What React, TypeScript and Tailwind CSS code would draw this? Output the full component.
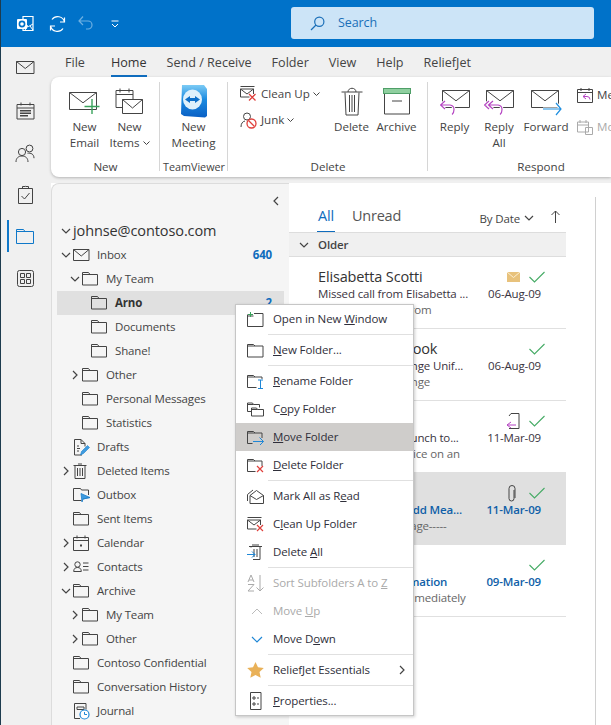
import type { ReactNode } from 'react'

const INK = '#444444'

function Svg({ w, h, children, className }: { w: number; h: number; children: ReactNode; className?: string }) {
  return (
    <svg width={w} height={h} viewBox={`0 0 ${w} ${h}`} fill="none" stroke={INK} strokeWidth="1" className={`shrink-0 ${className ?? ''}`}>
      {children}
    </svg>
  )
}

/* ---- small shared drawings ---- */
const Fold = ({ c = INK }: { c?: string }) => <path d="M.5 14V1.500h6l1.500 2h7.500V14z M.5 3.500H8" stroke={c} />

function FolderIcon({ children, c }: { children?: ReactNode; c?: string }) {
  return (
    <Svg w={18} h={16}>
      <Fold c={c} />
      {children}
    </Svg>
  )
}

function Chevron({ dir, c = INK }: { dir: 'down' | 'right' | 'up' | 'left'; c?: string }) {
  const d = { down: 'M1 3l4 4 4-4', right: 'M3 1l4 4-4 4', up: 'M1 7l4-4 4 4', left: 'M7 1L3 5l4 4' }[dir]
  return <Svg w={10} h={10}><path d={d} stroke={c} strokeWidth="1.2" /></Svg>
}

function Envelope({ x = 0, y = 0, w = 28, h = 18 }: { x?: number; y?: number; w?: number; h?: number }) {
  return (
    <g transform={`translate(${x} ${y})`}>
      <path d={`M.5 .5h${w - 1}v${h - 1}h-${w - 1}z`} fill="#fff" />
      <path d={`M.5 .5L${w / 2} ${h * 0.6}L${w - 0.5} .5`} />
    </g>
  )
}

/* ---- rail ---- */
const railIcons = [
  <Svg w={19} h={15}><path d="M.5 1.500h17.500v12H.5z M.5 1.500l8.750 7 8.750-7" /></Svg>,
  <Svg w={19} h={19}>
    <path d="M1 3.500h17v14.500H1z M1 7h17 M5 1.500v3 M14 1.500v3" />
    <path d="M4 9h11v1.500H4z M4 11.500h11V13H4z M4 14h8v1.500H4z" fill={INK} stroke="none" />
  </Svg>,
  <Svg w={20} h={19}>
    <circle cx="7" cy="8" r="3.600" />
    <path d="M1 18c0-4 2.500-6 6-6s6 2 6 6" />
    <circle cx="14.500" cy="4.500" r="3.400" />
    <path d="M12.500 9.200c3.500-.5 6.500 1 6.500 5" />
  </Svg>,
  <Svg w={15} h={19}>
    <path d="M.5 3.500h14v15H.5z M4.500 3.500V1.500h2.500a1 1 0 0 1 1 0h2.500v2" />
    <path d="M3.500 11l3 3 5-6" />
  </Svg>,
  <Svg w={18} h={15}><path d="M.5 14.500V.5h7l1.500 2h8.500v12z M.5 2.500H9" stroke="#0f78c9" /></Svg>,
  <Svg w={17} h={17}>
    <rect x=".5" y=".5" width="16" height="16" rx="2" />
    <path d="M3.500 3.500h4v4h-4z M9.500 3.500h4v4h-4z M3.500 9.500h4v4h-4z M9.500 9.500h4v4h-4z" />
  </Svg>,
]

function Rail() {
  return (
    <div className="w-[51px] shrink-0 flex flex-col items-center border-l border-[#1d3c4f] pr-[2px]">
      <div className="h-[43px] mt-[-1px] flex items-center">{railIcons[0]}</div>
      <div className="h-[43px] flex items-center">{railIcons[1]}</div>
      <div className="h-[43px] flex items-center">{railIcons[2]}</div>
      <div className="h-[38px] flex items-center">{railIcons[3]}</div>
      <div className="h-[46px] w-full flex items-center justify-center relative">
        <span className="absolute left-[6px] top-[7px] w-[2px] h-[32px] bg-[#0f78c9]" />
        {railIcons[4]}
      </div>
      <div className="h-[38px] flex items-center">{railIcons[5]}</div>
    </div>
  )
}

/* ---- title bar ---- */
function TitleBar() {
  return (
    <div className="h-[47px] shrink-0 bg-[#0072c9] flex items-center border-l border-[#1d3c4f]">
      <svg width="17" height="17" viewBox="0 0 17 17" className="ml-[16px]">
        <path d="M6 1.500h10v14H6z" fill="none" stroke="#fff" strokeWidth="1.2" />
        <path d="M8 9l3.500 2.500L16 9M8 15l3-4M16 15l-3-4" fill="none" stroke="#fff" />
        <rect x="0" y="4" width="10" height="10" rx="1" fill="#fff" />
        <circle cx="5" cy="9" r="2.600" fill="none" stroke="#0072c9" strokeWidth="1.6" />
      </svg>
      <svg width="17" height="18" viewBox="0 0 17 18" fill="none" stroke="#fff" strokeWidth="1.2" className="ml-[15px]">
        <path d="M15.500 7A7 7 0 0 0 3 4.500 M1.500 11A7 7 0 0 0 14 13.500" />
        <path d="M15.500 2.500V7H11 M1.500 15.500V11H6" />
      </svg>
      <svg width="15" height="17" viewBox="0 0 15 17" fill="none" stroke="#6db0e2" strokeWidth="1.2" className="ml-[12px]">
        <path d="M1 6h9a4 4 0 0 1 0 8H8 M5 1.500L1 6l4 4" />
      </svg>
      <svg width="8" height="8" viewBox="0 0 8 8" fill="none" stroke="#fff" className="ml-[18px]">
        <path d="M.5 1h7 M1 4l3 3 3-3" />
      </svg>
      <div className="ml-[172px] w-[303px] h-[32px] mb-[1px] rounded-[3px] bg-[#cce4f7] flex items-center pl-[19px]">
        <svg width="15" height="15" viewBox="0 0 15 15" fill="none" stroke="#1a6fb8" strokeWidth="1.2">
          <circle cx="9.300" cy="5.700" r="4.600" />
          <path d="M6 9L1 14" />
        </svg>
        <span className="ml-[13px] text-[12.5px] tracking-[-0.1px] text-[#1a6fb8]">Search</span>
      </div>
    </div>
  )
}

/* ---- ribbon ---- */
const tabs = ['File', 'Home', 'Send / Receive', 'Folder', 'View', 'Help', 'ReliefJet']

function Tabs() {
  return (
    <div className="h-[30px] flex items-center pl-[14px] pt-[2px] gap-[20px] text-[12.6px] text-[#444]">
      {tabs.map((t) =>
        t === 'Home' ? (
          <span key={t} className="relative ml-[6px] font-medium text-[#333]">
            {t}
            <span className="absolute left-0 right-0 bottom-[-5px] h-[2px] bg-[#0f6cbd]" />
          </span>
        ) : (
          <span key={t}>{t}</span>
        ),
      )}
    </div>
  )
}

function BigBtn({ icon, label, w = 'w-[45px]', dim }: { icon: ReactNode; label: ReactNode; w?: string; dim?: boolean }) {
  return (
    <div className={`${w} flex flex-col items-center shrink-0 ${dim ? 'text-[#aaa]' : ''}`}>
      <div className="h-[35px] flex items-center justify-center">{icon}</div>
      <div className="text-center leading-[16px] whitespace-nowrap">{label}</div>
    </div>
  )
}

function Group({ w, label, children, last, small }: { w: string; label: string; children: ReactNode; last?: boolean; small?: boolean }) {
  return (
    <div className={`${w} shrink-0 flex flex-col relative`}>
      <div className="flex-1 flex pt-[7px]">{children}</div>
      <div className={`h-[18px] mb-[1px] flex items-center justify-center text-[#444] ${small ? 'text-[10.8px]' : ''}`}>{label}</div>
      {!last && <span className="absolute right-0 top-[5px] bottom-[6px] w-[1px] bg-[#d6d6d6]" />}
    </div>
  )
}

const NewEmailIcon = (
  <Svg w={31} h={28}>
    <Envelope x={0} y={4} />
    <path d="M23 11v15 M15.500 18.500h15" stroke="#3aa35c" strokeWidth="1.4" />
  </Svg>
)
const NewItemsIcon = (
  <Svg w={29} h={29}>
    <path d="M1 3.500h17v17H1z M1 7.500h17 M5 1.500v4 M14 1.500v4" />
    <Envelope x={7} y={12} w={21} h={15} />
  </Svg>
)
const TeamViewerIcon = (
  <svg width="28" height="33" viewBox="0 0 28 33">
    <defs>
      <linearGradient id="tv" x1="0" y1="0" x2="0" y2="1">
        <stop offset="0" stopColor="#7ccbf5" />
        <stop offset=".45" stopColor="#1a8ae0" />
        <stop offset="1" stopColor="#0a5fc4" />
      </linearGradient>
    </defs>
    <path d="M2 0h22l3 4v27l-2 1.500L4 31 1 29z" fill="url(#tv)" />
    <ellipse cx="12.500" cy="14.500" rx="9.500" ry="10" fill="#dff0fb" />
    <path d="M5 14.500l5-3.500v2h5v-2l5 3.500-5 3.500v-2h-5v2z" fill="#0e6fc9" />
  </svg>
)
const DeleteIcon = (
  <Svg w={22} h={29}>
    <path d="M4 5.500l1 22.500h12l1-22.500 M.5 5h21 M7 5c0-5 8-5 8 0 M8.500 8v17 M11 8v17 M13.500 8v17" />
  </Svg>
)
const ArchiveIcon = (
  <Svg w={28} h={27}>
    <rect x=".5" y=".5" width="27" height="5" fill="#8fcf9f" stroke="#4f9f68" />
    <path d="M1.500 6v20h25V6 M9 13h10" />
  </Svg>
)
const ReplyArrow = ({ x = 0 }: { x?: number }) => {
  const d = `M${x + 5} 12l-4.500 4 4.500 4 M${x + 1} 16h9a4.500 4.500 0 0 1 4 4.500c0 2-.5 4-2 5`
  return (
    <>
      <path d={d} stroke="#fff" strokeWidth="3" />
      <path d={d} stroke="#b545c2" strokeWidth="1.2" />
    </>
  )
}
const ReplyIcon = (
  <Svg w={30} h={28} className="mt-[3px]">
    <Envelope x={2} y={1} />
    <ReplyArrow />
  </Svg>
)
const ReplyAllIcon = (
  <Svg w={30} h={28} className="mt-[3px]">
    <Envelope x={2} y={1} />
    <path d="M5 12l-4.500 4 4.500 4" stroke="#fff" strokeWidth="3" />
    <ReplyArrow x={4} />
    <path d="M5 12l-4.500 4 4.500 4" stroke="#b545c2" strokeWidth="1.2" />
  </Svg>
)
const ForwardIcon = (
  <Svg w={31} h={26} className="mt-[3px]">
    <Envelope x={0} y={0} />
    <path d="M12 19h18 M25 13l5 6-5 6" stroke="#fff" strokeWidth="3" />
    <path d="M12 19h18 M25 13l5 6-5 6" stroke="#1f8fe0" strokeWidth="1.2" />
  </Svg>
)
const CleanUpIcon = (
  <Svg w={17} h={16}>
    <path d="M.5 .5h14 M.5 3v8h9 M.5 3h13v5 M.5 3l6.500 5 6.500-5" />
    <path d="M9 8l6.500 6.500 M15.500 8L9 14.500" stroke="#e0403c" strokeWidth="1.3" />
  </Svg>
)
const JunkIcon = (
  <Svg w={17} h={17}>
    <circle cx="7" cy="4.500" r="3.500" />
    <path d="M1 15c0-3.500 1.500-5.500 4-6" />
    <circle cx="11.500" cy="11.500" r="4.500" stroke="#e0403c" strokeWidth="1.3" />
    <path d="M8.500 8.500l6 6" stroke="#e0403c" strokeWidth="1.3" />
  </Svg>
)
const SmallDown = <svg width="7" height="5" viewBox="0 0 7 5" fill="none" stroke="#444" className="inline-block ml-[3px] mb-[1px]"><path d="M.5 .5l3 3 3-3" /></svg>

function Ribbon() {
  return (
    <div className="h-[100px] bg-white rounded-l-[8px] shadow-[0_1px_3px_rgba(0,0,0,0.25)] flex text-[11.6px] text-[#444]">
      <Group w="w-[109px]" label="New">
        <div className="w-[11px]" />
        <BigBtn icon={NewEmailIcon} label={<>New<br />Email</>} />
        <BigBtn icon={NewItemsIcon} label={<>New<br />Items{SmallDown}</>} />
      </Group>
      <Group w="w-[68px]" label="TeamViewer" small>
        <BigBtn w="w-[67px]" icon={TeamViewerIcon} label={<>New<br />Meeting</>} />
      </Group>
      <Group w="w-[200px]" label="Delete">
        <div className="w-[101px] pl-[12px] shrink-0 flex flex-col gap-[8px] pt-[1px]">
          <div className="flex items-center gap-[4px] h-[18px]">{CleanUpIcon}<span>Clean Up{SmallDown}</span></div>
          <div className="flex items-center gap-[4px] h-[18px]">{JunkIcon}<span>Junk{SmallDown}</span></div>
        </div>
        <BigBtn icon={DeleteIcon} label="Delete" />
        <BigBtn icon={ArchiveIcon} label="Archive" />
      </Group>
      <Group w="w-[226px]" label="Respond" last>
        <div className="w-[4px]" />
        <BigBtn w="w-[45px]" icon={ReplyIcon} label="Reply" />
        <BigBtn w="w-[44px]" icon={ReplyAllIcon} label={<>Reply<br />All</>} />
        <BigBtn w="w-[50px]" icon={ForwardIcon} label="Forward" />
        <div className="pl-[6px] flex flex-col gap-[14px] pt-[2px]">
          <div className="flex items-center gap-[4px] h-[18px] whitespace-nowrap">
            <Svg w={16} h={16}><path d="M.5 2.500h15v13H.5z M.5 5.500h15 M4 1v3 M12 1v3" /><path d="M9 7l-3 2.500 3 2.500 M6 9.500h4a3 3 0 0 1 3 3" stroke="#b545c2" /></Svg>
            <span>Meeting</span>
          </div>
          <div className="flex items-center gap-[4px] h-[18px] whitespace-nowrap text-[#aaa]">
            <Svg w={16} h={16}><path d="M.5 3h11v10H.5z M.5 6h11 M3 1v3 M9 1v3 M8.500 8.500h7v7h-7z" stroke="#aaa" fill="#fff" /></Svg>
            <span>More</span>
          </div>
        </div>
      </Group>
    </div>
  )
}

/* ---- folder tree ---- */
const TreeIcons: Record<string, ReactNode> = {
  folder: <FolderIcon />,
  mail: <Svg w={17} h={14}><path d="M.5 1.500h15.500v11H.5z M.5 1.500l7.750 6.500 7.750-6.500" /></Svg>,
  drafts: (
    <Svg w={17} h={17}>
      <path d="M9 16H1.500V.5H8l4 4v3 M8 .5v4h4 M4 7h2 M4 9.500h3 M4 12h2" />
      <path d="M7.500 16l1-3.500 6-6 2 2-6 6z" fill="#3d9be0" stroke="#1f7fc9" strokeWidth=".6" />
    </Svg>
  ),
  trash: <Svg w={14} h={16}><path d="M2 2.500v13h10v-13 M.5 2.500h13 M5 1h4 M4.500 5v8 M7 5v8 M9.500 5v8" /></Svg>,
  outbox: (
    <Svg w={18} h={16}>
      <path d="M.5 13.500V1.500h7l1 1.500h7v5 M.5 13.500h8" />
      <path d="M8 6.500l9 4-7 1.500-1 3z M10 12l7-1.500" fill="#3d9be0" stroke="#1f7fc9" strokeWidth=".8" />
    </Svg>
  ),
  calendar: (
    <Svg w={16} h={16}>
      <path d="M.5 2.500h15v13H.5z M.5 5.500h15 M4 .5v3 M12 .5v3" />
      <rect x="7" y="9.500" width="2" height="2" fill={INK} stroke="none" />
    </Svg>
  ),
  contacts: (
    <Svg w={16} h={14}>
      <circle cx="4.500" cy="4.500" r="2.700" />
      <path d="M.7 11.500c0-2.800 1.500-4 3.800-4s3.800 1.200 3.800 4z M10 3h5.500 M10 6.500h5.500 M10 10h5.500" />
    </Svg>
  ),
  journal: (
    <Svg w={17} h={17}>
      <path d="M7 15.500H1.500V.5h11.500v6 M4 4h7v2.500H4z" />
      <circle cx="11.500" cy="11.500" r="4.500" fill="#fff" stroke="#1f87d6" strokeWidth="1.2" />
      <path d="M11.500 9v2.500h2.500" stroke="#1f87d6" />
    </Svg>
  ),
}

type TreeRow = { label: string; depth: number; icon?: string; open?: boolean; closed?: boolean; count?: string; selected?: boolean }

const rows: TreeRow[] = [
  { label: 'Inbox', depth: 0, icon: 'mail', open: true, count: '640' },
  { label: 'My Team', depth: 1, open: true },
  { label: 'Arno', depth: 2, selected: true, count: '2' },
  { label: 'Documents', depth: 2 },
  { label: 'Shane!', depth: 2 },
  { label: 'Other', depth: 1, closed: true },
  { label: 'Personal Messages', depth: 1 },
  { label: 'Statistics', depth: 1 },
  { label: 'Drafts', depth: 0, icon: 'drafts' },
  { label: 'Deleted Items', depth: 0, icon: 'trash', closed: true },
  { label: 'Outbox', depth: 0, icon: 'outbox' },
  { label: 'Sent Items', depth: 0 },
  { label: 'Calendar', depth: 0, icon: 'calendar', closed: true },
  { label: 'Contacts', depth: 0, icon: 'contacts', closed: true },
  { label: 'Archive', depth: 0, open: true },
  { label: 'My Team', depth: 1, closed: true },
  { label: 'Other', depth: 1, closed: true },
  { label: 'Contoso Confidential', depth: 0 },
  { label: 'Conversation History', depth: 0 },
  { label: 'Journal', depth: 0, icon: 'journal' },
]

const indent = ['pl-[4px]', 'pl-[13px]', 'pl-[22px]']

function FolderPane() {
  return (
    <div className="w-[238px] shrink-0 bg-[#f5f5f5] rounded-tl-[8px] border-t border-l border-[#dcdcdc] overflow-hidden tracking-[-0.15px]">
      <div className="h-[22px] flex justify-end items-end pr-[8px]"><Chevron dir="left" /></div>
      <div className="h-[13px]" />
      <div className="h-[24px] flex items-center pl-[9px] text-[14.5px] tracking-[-0.1px] text-[#333]">
        <Chevron dir="down" />
        <span className="ml-[2px]">johnse@contoso.com</span>
      </div>
      {rows.map((r, i) => (
        <div key={i} className={`ml-[5px] w-[227px] h-[24px] flex items-center ${indent[r.depth]} ${r.selected ? 'bg-[#e0e0e0]' : ''}`}>
          <span className="w-[12px] shrink-0 flex">
            {r.open && <Chevron dir="down" />}
            {r.closed && <Chevron dir="right" />}
          </span>
          <span className="w-[24px] shrink-0 flex">{TreeIcons[r.icon ?? 'folder']}</span>
          <span className={`flex-1 whitespace-nowrap ${r.selected ? 'font-bold text-[#333]' : 'text-[#444]'}`}>{r.label}</span>
          {r.count && <span className="font-bold text-[#0f6cbd] pr-[12px]">{r.count}</span>}
        </div>
      ))}
    </div>
  )
}

/* ---- message list ---- */
const Check = <Svg w={16} h={12}><path d="M.5 6l5 5L15.500 1" stroke="#46ab66" strokeWidth="1.1" /></Svg>

type Msg = { name: string; subject: string; preview: string; date: string; icon?: ReactNode; unread?: boolean; selected?: boolean }

const messages: Msg[] = [
  {
    name: 'Elisabetta Scotti',
    subject: 'Missed call from Elisabetta ...',
    preview: 'You missed calls from',
    date: '06-Aug-09',
    icon: <svg width="13" height="10" viewBox="0 0 13 10" className="mr-[9px]"><rect width="13" height="10" fill="#e8c27c" /><path d="M0 0l6.500 5.500L13 0" fill="none" stroke="#fbeed2" /></svg>,
  },
  { name: 'Microsoft Outlook', subject: 'A Microsoft Exchange Unif...', preview: 'A Microsoft Exchange', date: '06-Aug-09' },
  {
    name: 'Arno Bost',
    subject: "Let's go out for a lunch to...",
    preview: 'Please see the notice on an',
    date: '11-Mar-09',
    icon: (
      <Svg w={14} h={17} className="mr-[9px]">
        <path d="M5 .5h8v15H3 M5 .5L3 3" />
        <path d="M5 9l-4 3 4 3 M1 12h9" stroke="#b545c2" />
      </Svg>
    ),
  },
  {
    name: 'Arno Bost',
    subject: 'Fwd: Notes for Todd Mea...',
    preview: '------Original Message-----',
    date: '11-Mar-09',
    unread: true,
    selected: true,
    icon: (
      <Svg w={10} h={17} className="mr-[12px]">
        <path d="M7 5v8.500a2.500 2.500 0 0 1-5 0V3.500a3 3 0 0 1 6 0V13" />
      </Svg>
    ),
  },
  {
    name: 'Shane Kim',
    subject: 'A Meeting Confirmation',
    preview: 'Please respond immediately',
    date: '09-Mar-09',
    unread: true,
  },
]

function MessageRow({ m }: { m: Msg }) {
  return (
    <div className={`h-[72px] pl-[29px] pr-[25px] border-b border-[#e0e0e0] tracking-[-0.15px] ${m.selected ? 'bg-[#e0e0e0]' : ''}`}>
      <div className="h-[29px] pt-[11px] flex items-center justify-between">
        <span className="text-[14.5px] text-[#333] whitespace-nowrap">{m.name}</span>
        <span className="flex items-center mr-[-4px]">{m.icon}{Check}</span>
      </div>
      <div className={`h-[16px] flex items-center justify-between whitespace-nowrap ${m.unread ? 'font-semibold text-[#0f5fa8]' : 'text-[#3a3340]'}`}>
        <span>{m.subject}</span>
        <span>{m.date}</span>
      </div>
      <div className="h-[15px] flex items-center text-[#666] whitespace-nowrap">{m.preview}</div>
    </div>
  )
}

function MessageList() {
  return (
    <div className="w-[277px] shrink-0 bg-white">
      <div className="h-[49px] pl-[28px] pr-[6px] flex items-end justify-between">
        <div className="flex gap-[17px] text-[14.5px] tracking-[-0.2px]">
          <span className="relative text-[#0f6cbd] pb-[5px] px-[1px]">
            All
            <span className="absolute left-0 right-0 bottom-0 h-[1px] bg-[#0f6cbd]" />
          </span>
          <span className="text-[#555] pb-[5px]">Unread</span>
        </div>
        <div className="flex items-center pb-[5px] text-[#444] tracking-[-0.15px]">
          <span>By Date</span>
          <span className="ml-[4px]"><Chevron dir="down" /></span>
          <svg width="9" height="13" viewBox="0 0 9 13" fill="none" stroke="#444" className="ml-[17px] mb-[3px]"><path d="M4.500 13V1 M.5 5l4-4 4 4" /></svg>
        </div>
      </div>
      <div className="h-[25px] bg-[#f0f0f0] border-y border-[#dddddd] flex items-center pl-[10px] text-[#444] font-semibold tracking-[-0.15px]">
        <Chevron dir="down" />
        <span className="ml-[9px]">Older</span>
      </div>
      {messages.map((m) => <MessageRow key={m.date + m.subject} m={m} />)}
    </div>
  )
}

/* ---- context menu ---- */
const MI = {
  open: <Svg w={17} h={15}><path d="M.5 2.500v12h15.500v-13H7 M.5 4h6" /><path d="M3.500 0v5 M1 2.500h5" stroke="#3aa35c" /></Svg>,
  fold: <Svg w={17} h={15}><path d="M.5 14V1.500h6l1.500 1.500h8v11z M.5 3H8" /></Svg>,
  rename: <Svg w={17} h={15}><path d="M.5 13.500V1.500h6l1.500 1.500h7v2 M.5 3H8 M.5 13.500h9" /><path d="M11 6h5 M11 14.500h5 M13.500 6v8.500" stroke="#1f87d6" /></Svg>,
  copy: <Svg w={17} h={15}><path d="M.5 9.500V1h5l1 1.500h6v3 M.5 2.500h6 M.5 9.500H4" /><path d="M4.500 14V6h5l1 1.500h6V14z M4.500 7.500h6" /></Svg>,
  move: <Svg w={17} h={15}><path d="M.5 13.500V1.500h6l1.500 1.500h7v5 M.5 3H8 M.5 13.500h5" /><path d="M6 11.500h10.500 M12.500 7.500l4 4-4 4" stroke="#1f87d6" /></Svg>,
  del: <Svg w={17} h={15}><path d="M.5 13.500V1.500h6l1.500 1.500h7v5 M.5 3H8 M.5 13.500h8" /><path d="M10 8l6 6 M16 8l-6 6" stroke="#e0403c" strokeWidth="1.2" /></Svg>,
  read: <Svg w={17} h={15}><path d="M3 14.500h13.500V6.500L9.500 1.500 3 6.500z M3 6.500l6.500 4 7-4 M.5 12V5.500L6 1" /></Svg>,
  clean: <Svg w={17} h={15}><path d="M.5 .5h14 M.5 3v9h9 M.5 3h13v5 M.5 3l6.500 5 6.500-5" /><path d="M10 8l6 6 M16 8l-6 6" stroke="#e0403c" strokeWidth="1.2" /></Svg>,
  delAll: <Svg w={17} h={17}><path d="M4 2.500v1 M2 2.500h13 M5 1h7 M13 2.500V15.500H6 M7 5v8 M10 5v8" /><path d="M0 10.500h8 M5 7.500l3 3-3 3" stroke="#1f87d6" /></Svg>,
  sort: <Svg w={17} h={18}><path d="M1 8l3-7 3 7 M2 6h4 M1 10.500h6l-6 6.500h6 M13 1v16 M9.500 13.500l3.500 3.500 3.500-3.500" stroke="#aaa" /></Svg>,
  up: <Svg w={17} h={7}><path d="M5 6l5-5 5 5" stroke="#bbb" /></Svg>,
  down: <Svg w={17} h={7}><path d="M5 1l5 5 5-5" stroke="#1f87d6" strokeWidth="1.2" /></Svg>,
  star: (
    <svg width="17" height="16" viewBox="0 0 17 16" className="shrink-0">
      <path d="M8.500 0l2.500 5.300 5.800.7-4.300 4 1.200 5.800-5.200-2.900-5.200 2.900 1.200-5.800L.2 6l5.800-.7z" fill="#e9b158" />
    </svg>
  ),
  props: <Svg w={17} h={18}><path d="M3.500 .5h10.500v17h-10.500z" /><path d="M6 5h2v2H6z M6 11h2v2H6z M10 6h2 M10 12h2" /></Svg>,
}

type MenuEntry = { label: string; icon: ReactNode; dim?: boolean; hover?: boolean; sub?: boolean } | 'sep'

const menu: MenuEntry[] = [
  { label: 'Open in New &Window', icon: MI.open },
  'sep',
  { label: '&New Folder...', icon: MI.fold },
  'sep',
  { label: '&Rename Folder', icon: MI.rename },
  { label: 'C&opy Folder', icon: MI.copy },
  { label: '&Move Folder', icon: MI.move, hover: true },
  { label: '&Delete Folder', icon: MI.del },
  'sep',
  { label: 'Mark All as R&ead', icon: MI.read },
  { label: 'C&lean Up Folder', icon: MI.clean },
  { label: 'Delete &All', icon: MI.delAll },
  'sep',
  { label: 'Sort Subfolders A to &Z', icon: MI.sort, dim: true },
  { label: 'Move &Up', icon: MI.up, dim: true },
  { label: 'Move D&own', icon: MI.down },
  'sep',
  { label: 'ReliefJet Essentials', icon: MI.star, sub: true },
  'sep',
  { label: '&Properties...', icon: MI.props },
]

function AccessLabel({ text }: { text: string }) {
  const i = text.indexOf('&')
  if (i < 0) return <span>{text}</span>
  return (
    <span>
      {text.slice(0, i)}
      <u>{text[i + 1]}</u>
      {text.slice(i + 2)}
    </span>
  )
}

function ContextMenu() {
  return (
    <div className="absolute left-[235px] top-[304px] w-[179px] bg-white border border-[#c6c6c6] shadow-[1px_1px_3px_rgba(0,0,0,0.2)] text-[#2f2f3a] tracking-[-0.1px]">
      {menu.map((m, i) =>
        m === 'sep' ? (
          <div key={i} className="h-[3px] pl-[32px] flex items-center"><div className="h-[1px] w-full bg-[#e0e0e0]" /></div>
        ) : (
          <div key={i} className={`h-[28px] flex items-center pl-[11px] ${m.hover ? 'bg-[#cfcdcb]' : ''} ${m.dim ? 'text-[#aaa]' : ''}`}>
            <span className="w-[26px] shrink-0 flex items-center">{m.icon}</span>
            <span className="flex-1 whitespace-nowrap"><AccessLabel text={m.label} /></span>
            {m.sub && <span className="mr-[6px]"><Chevron dir="right" /></span>}
          </div>
        ),
      )}
    </div>
  )
}

export default function App() {
  return (
    <div className="relative w-[611px] h-[725px] overflow-hidden bg-[#f0f0f0] flex flex-col text-[11.5px] font-['Open_Sans',sans-serif]">
      <TitleBar />
      <div className="flex flex-1 min-h-0">
        <Rail />
        <div className="flex-1 min-w-0 flex flex-col">
          <Tabs />
          <Ribbon />
          <div className="mt-[6px] flex flex-1 min-h-0 bg-white">
            <FolderPane />
            <MessageList />
            <div className="w-[29px] shrink-0" />
            <div className="mt-[14px] w-[1px] bg-[#d0d0d0]" />
          </div>
        </div>
      </div>
      <ContextMenu />
    </div>
  )
}
